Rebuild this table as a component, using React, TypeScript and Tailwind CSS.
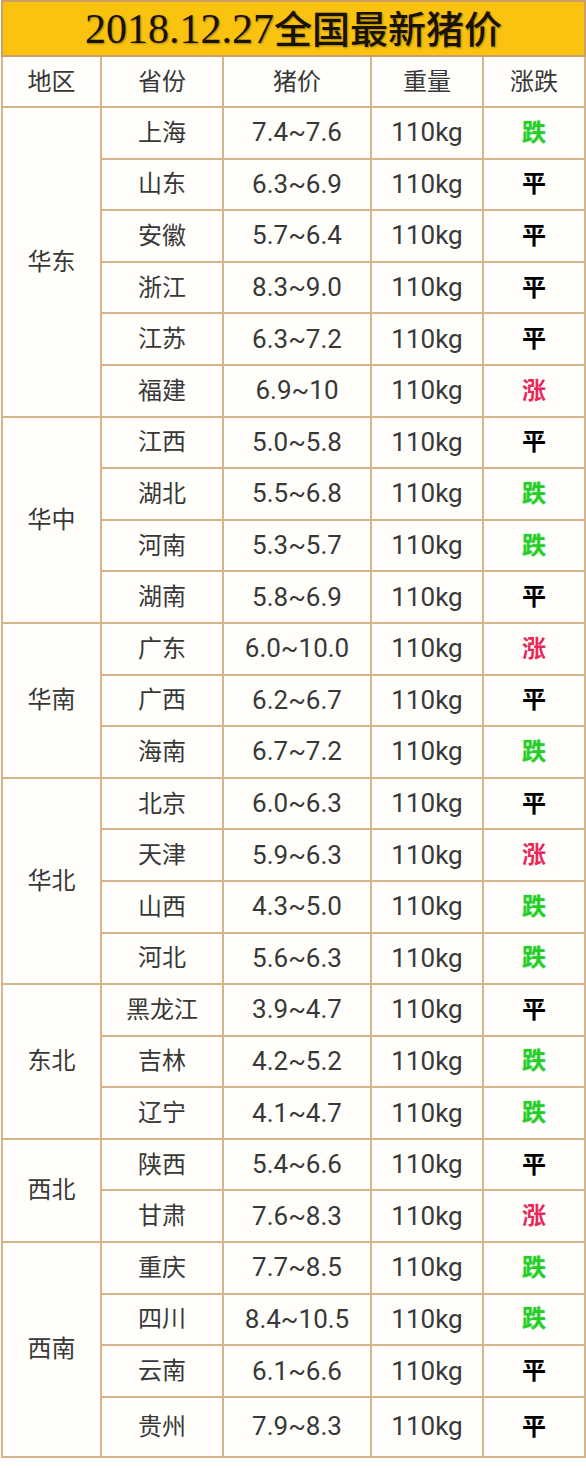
import React from "react";

type Trend = "涨" | "跌" | "平";

interface PriceRow {
  province: string;
  price: string;
  trend: Trend;
}

interface RegionGroup {
  region: string;
  rows: PriceRow[];
}

const groups: RegionGroup[] = [
  {
    region: "华东",
    rows: [
      { province: "上海", price: "7.4~7.6", trend: "跌" },
      { province: "山东", price: "6.3~6.9", trend: "平" },
      { province: "安徽", price: "5.7~6.4", trend: "平" },
      { province: "浙江", price: "8.3~9.0", trend: "平" },
      { province: "江苏", price: "6.3~7.2", trend: "平" },
      { province: "福建", price: "6.9~10", trend: "涨" },
    ],
  },
  {
    region: "华中",
    rows: [
      { province: "江西", price: "5.0~5.8", trend: "平" },
      { province: "湖北", price: "5.5~6.8", trend: "跌" },
      { province: "河南", price: "5.3~5.7", trend: "跌" },
      { province: "湖南", price: "5.8~6.9", trend: "平" },
    ],
  },
  {
    region: "华南",
    rows: [
      { province: "广东", price: "6.0~10.0", trend: "涨" },
      { province: "广西", price: "6.2~6.7", trend: "平" },
      { province: "海南", price: "6.7~7.2", trend: "跌" },
    ],
  },
  {
    region: "华北",
    rows: [
      { province: "北京", price: "6.0~6.3", trend: "平" },
      { province: "天津", price: "5.9~6.3", trend: "涨" },
      { province: "山西", price: "4.3~5.0", trend: "跌" },
      { province: "河北", price: "5.6~6.3", trend: "跌" },
    ],
  },
  {
    region: "东北",
    rows: [
      { province: "黑龙江", price: "3.9~4.7", trend: "平" },
      { province: "吉林", price: "4.2~5.2", trend: "跌" },
      { province: "辽宁", price: "4.1~4.7", trend: "跌" },
    ],
  },
  {
    region: "西北",
    rows: [
      { province: "陕西", price: "5.4~6.6", trend: "平" },
      { province: "甘肃", price: "7.6~8.3", trend: "涨" },
    ],
  },
  {
    region: "西南",
    rows: [
      { province: "重庆", price: "7.7~8.5", trend: "跌" },
      { province: "四川", price: "8.4~10.5", trend: "跌" },
      { province: "云南", price: "6.1~6.6", trend: "平" },
      { province: "贵州", price: "7.9~8.3", trend: "平" },
    ],
  },
];

const trendClass: Record<Trend, string> = {
  涨: "text-[#e8275a]",
  跌: "text-[#28cc2a] [text-shadow:0_0_2px_rgba(40,220,40,0.45)]",
  平: "text-black",
};

const cell = "border-2 border-[#d6b58c] p-0 text-center align-middle";

export default function App() {
  return (
    <div className="h-[1468px] w-[586px] bg-white font-['Roboto','Noto_Sans_CJK_SC',sans-serif] text-[#383838]">
      <table className="ml-[1px] w-[583px] table-fixed border-collapse bg-[#fffefb]">
        <colgroup>
          <col className="w-[99px]" />
          <col className="w-[122px]" />
          <col className="w-[148px]" />
          <col className="w-[112px]" />
          <col className="w-[102px]" />
        </colgroup>
        <thead>
          <tr>
            <th
              colSpan={5}
              className="h-[55px] border-2 border-[#c9a06a] bg-[#f9c30f] p-0 text-center font-normal text-[#1a1200] [text-shadow:1px_1px_2px_rgba(0,0,0,0.35)]"
            >
              <span className="font-['Liberation_Serif',serif] text-[42px] leading-none">
                2018.12.27
              </span>
              <span className="font-['Noto_Sans_CJK_SC',sans-serif] text-[38px] font-medium leading-none">
                全国最新猪价
              </span>
            </th>
          </tr>
          <tr className="text-[24px]">
            {["地区", "省份", "猪价", "重量", "涨跌"].map((label) => (
              <th key={label} className={`${cell} h-[51px] font-normal`}>
                {label}
              </th>
            ))}
          </tr>
        </thead>
        <tbody>
          {groups.map((group, groupIndex) =>
            group.rows.map((row, index) => {
              // the picture's last row runs a little taller than the rest
              const isLast = groupIndex === groups.length - 1 && index === group.rows.length - 1;
              return (
                <tr key={row.province}>
                  {index === 0 && (
                    <td rowSpan={group.rows.length} className={`${cell} text-[24px]`}>
                      {group.region}
                    </td>
                  )}
                  <td className={`${cell} ${isLast ? "h-[60px]" : "h-[51.6px]"} text-[24px]`}>
                    {row.province}
                  </td>
                  <td className={`${cell} text-[26px]`}>{row.price}</td>
                  <td className={`${cell} text-[26px]`}>110kg</td>
                  <td className={`${cell} text-[24px] font-bold ${trendClass[row.trend]}`}>
                    {row.trend}
                  </td>
                </tr>
              );
            }),
          )}
        </tbody>
      </table>
    </div>
  );
}
